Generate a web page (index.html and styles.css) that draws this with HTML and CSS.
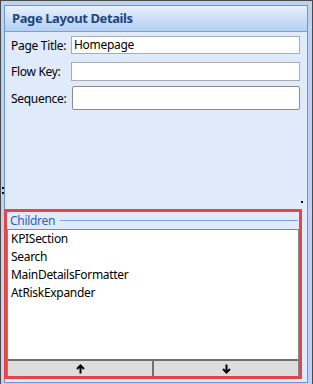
FILE: index.html
```html
<!DOCTYPE html>
<html>
<head>
<meta charset="utf-8">
<link rel="stylesheet" href="styles.css">
</head>
<body>
<div class="window">
  <div class="panel">
    <div class="header">Page Layout Details</div>
    <div class="form">
      <div class="row row-title">
        <label class="label">Page Title:</label>
        <div class="input">Homepage</div>
      </div>
      <div class="row row-flow">
        <label class="label">Flow Key:</label>
        <div class="input"></div>
      </div>
      <div class="row row-seq">
        <label class="label">Sequence:</label>
        <div class="input input-seq"></div>
      </div>
    </div>
    <div class="spacer"></div>
    <div class="highlight">
      <div class="group-title">
        <span class="group-text">Children</span>
        <span class="group-line"></span>
      </div>
      <div class="listbox">
        <div class="items">
          <div class="item">KPISection</div>
          <div class="item">Search</div>
          <div class="item">MainDetailsFormatter</div>
          <div class="item">AtRiskExpander</div>
        </div>
        <div class="buttons">
          <div class="btn">
            <svg width="9" height="10" viewBox="0 0 9 10"><path d="M4.5 9.5V1.5M1 5L4.5 1.5L8 5" fill="none" stroke="#000" stroke-width="2"/></svg>
          </div>
          <div class="btn">
            <svg width="9" height="10" viewBox="0 0 9 10"><path d="M4.5 0.5V8.5M1 5L4.5 8.5L8 5" fill="none" stroke="#000" stroke-width="2"/></svg>
          </div>
        </div>
      </div>
    </div>
  </div>
  <span class="grip grip-l1"></span>
  <span class="grip grip-l2"></span>
  <span class="grip grip-r"></span>
</div>
</body>
</html>
```
FILE: styles.css
```css
* { box-sizing: border-box; }
html, body { margin: 0; padding: 0; }
body {
  width: 313px;
  height: 384px;
  font-family: "Noto Sans", "Open Sans", sans-serif;
  font-size: 12px;
  letter-spacing: -0.3px;
  color: #000;
  overflow: hidden;
}
.window {
  position: relative;
  width: 313px;
  height: 384px;
  background: #bcd4f2;
  border: 1px solid #4a4a4a;
  border-bottom: none;
  padding: 4px 4px 1px 3px;
  display: flex;
}
.panel {
  flex: 1;
  display: flex;
  flex-direction: column;
  border: 1px solid #6d95d0;
  background: #dfeafa;
}
.header {
  height: 26px;
  border-bottom: 1px solid #7aa0d6;
  background: linear-gradient(#e8f1fc, #b2cff3);
  color: #1c4585;
  font-weight: 700;
  font-size: 13px;
  letter-spacing: -0.4px;
  line-height: 25px;
  padding-left: 7px;
}
.form {
  padding: 4px 7px 0 6px;
}
.row {
  display: flex;
  align-items: center;
}
.label {
  width: 60px;
  flex: none;
}
.input {
  flex: 1;
  background: #fff;
  border: 1px solid #a9abb0;
  height: 18px;
  line-height: 16px;
  padding-left: 2px;
}
.row-flow { margin-top: 8px; }
.row-flow .input { height: 19px; }
.row-seq { margin-top: 5px; }
.input-seq {
  height: 24px;
  margin-left: 1px;
  border-color: #8a8a8a;
  border-radius: 2px;
}
.spacer { flex: 1; }
.highlight {
  margin-left: -1px;
  margin-right: 5px;
  margin-bottom: 3px;
  height: 170px;
  border: 3px solid #e64545;
  display: flex;
  flex-direction: column;
}
.group-title {
  display: flex;
  align-items: center;
  height: 17px;
  padding-left: 3px;
}
.group-text {
  color: #2d5fb4;
  margin-right: 5px;
}
.group-line {
  flex: 1;
  height: 1px;
  background: #7d9fd6;
  margin-right: 1px;
}
.listbox {
  flex: 1;
  display: flex;
  flex-direction: column;
  background: #fff;
  border: 1px solid #828790;
  border-bottom: none;
}
.items {
  flex: 1;
  padding: 0 0 0 3px;
}
.item {
  height: 18px;
  line-height: 18px;
}
.buttons {
  display: flex;
  height: 17px;
  border-top: 2px solid #707070;
}
.btn {
  flex: 1;
  display: flex;
  align-items: center;
  justify-content: center;
  background: #dddddd;
}
.btn + .btn { border-left: 2px solid #707070; }
.grip {
  position: absolute;
  width: 2px;
  height: 2px;
  background: #000;
}
.grip-l1 { left: 1px; top: 186px; }
.grip-l2 { left: 1px; top: 191px; }
.grip-r { left: 300px; top: 200px; }
```
